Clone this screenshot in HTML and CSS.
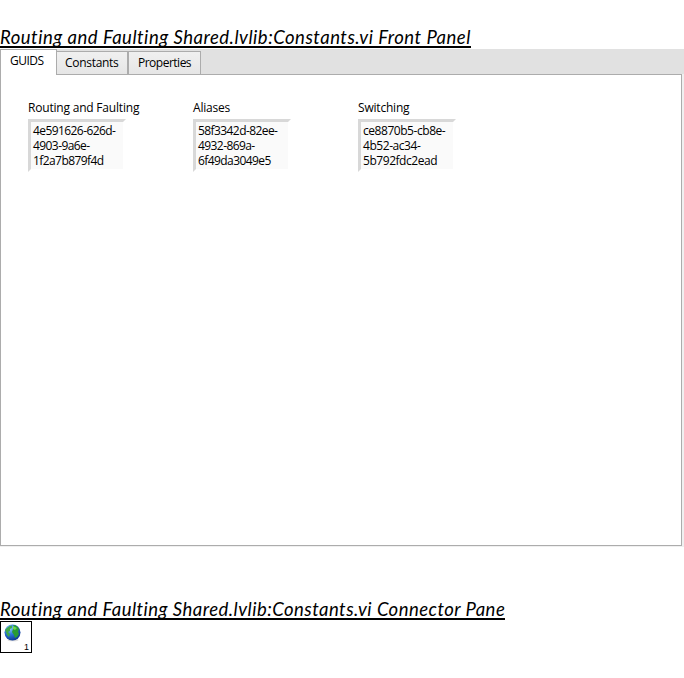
FILE: index.html
```
<!DOCTYPE html>
<html lang="en">
<head>
<meta charset="utf-8">
<title>Constants.vi</title>
<link rel="stylesheet" href="styles.css">
</head>
<body>
<h1 class="heading front"><span>Routing and Faulting Shared.lvlib:Constants.vi Front Panel</span></h1>
<main class="window">
  <nav class="tabs">
    <div class="tab active">GUIDS</div>
    <div class="tab constants">Constants</div>
    <div class="tab properties">Properties</div>
  </nav>
  <section class="panel">
    <div class="control">
      <div class="label">Routing and Faulting</div>
      <div class="field">4e591626-626d-<br>4903-9a6e-<br>1f2a7b879f4d</div>
    </div>
    <div class="control">
      <div class="label">Aliases</div>
      <div class="field">58f3342d-82ee-<br>4932-869a-<br>6f49da3049e5</div>
    </div>
    <div class="control">
      <div class="label">Switching</div>
      <div class="field switching">ce8870b5-cb8e-<br>4b52-ac34-<br>5b792fdc2ead</div>
    </div>
  </section>
</main>
<h2 class="heading connector"><span>Routing and Faulting Shared.lvlib:Constants.vi Connector Pane</span></h2>
<div class="vi-icon">
  <svg width="18" height="18" viewBox="0 0 18 18" aria-hidden="true">
    <defs><radialGradient id="sea" cx=".35" cy=".25" r=".8"><stop offset="0" stop-color="#8ccbfa"/><stop offset=".45" stop-color="#2f78dc"/><stop offset="1" stop-color="#0a3290"/></radialGradient></defs>
    <ellipse cx="10" cy="16" rx="5.5" ry="1.3" fill="#ddd"/>
    <circle cx="9.5" cy="8.5" r="8" fill="url(#sea)"/>
    <path d="M4 4Q6 1.500 9 1.500L9 4 7 5 7 7 5 8 7 10 6 13 4 11 3 8 2 6Z" fill="#3fa94c"/>
    <path d="M10 1Q14 1 16 5L15 8 16 10 14 13 12 14 11 11 9 8 10 5 12 4Z" fill="#299b35"/>
    <path d="M10 2L14 4 12 6 10 5Z" fill="#71d650"/>
  </svg>
  <span class="number">1</span>
</div>
</body>
</html>
```
FILE: styles.css
```
* { box-sizing: border-box; }
body { margin: 0; background: #fff; color: #000; font-family: "Open Sans", sans-serif; }
.heading { margin: 0; height: 20px; overflow: hidden; border-bottom: 2px solid #000; font: italic 400 18.5px/18px Lato, sans-serif; letter-spacing: .5px; white-space: nowrap; }
.heading span { display: block; }
.front { margin-top: 28px; width: 471px; }
.connector { margin-top: 53px; width: 505px; letter-spacing: .47px; }
.window { margin-top: 1px; width: 684px; height: 498px; background: #f0f0f0; }
.tabs { display: flex; align-items: flex-end; height: 25px; background: #e1e1e1; font-size: 12px; line-height: 16px; letter-spacing: -.3px; }
.tab { height: 23px; padding: 3px 0 0 8px; border: solid #acacac; border-width: 1px 1px 0 0; background: linear-gradient(#f0f0f0, #e6e6e6); white-space: nowrap; }
.tab.active { z-index: 1; width: 57px; height: 26px; margin-bottom: -1px; padding: 3px 0 0 9px; border-left: 1px solid #acacac; background: #fff; letter-spacing: -.5px; }
.constants { width: 71px; }
.properties { width: 73px; padding-left: 9px; border-left: 1px solid #acacac; letter-spacing: -.5px; }
.panel { display: flex; width: 682px; height: 472px; padding: 25px 0 0 27px; border: 1px solid #acacac; background: #fff; }
.control { width: 165px; font-size: 12px; }
.label { height: 19px; line-height: 16px; letter-spacing: -.2px; white-space: nowrap; }
.field { width: 98px; height: 53px; padding: 1px 0 0 2px; border: 3px solid transparent; border-top-color: #d8d8d8; border-left-color: #d8d8d8; background: #fafafa padding-box; line-height: 15px; letter-spacing: -.58px; white-space: nowrap; }
.field.switching { letter-spacing: -.45px; }
.vi-icon { display: flex; width: 32px; height: 32px; margin-top: 1px; padding: 2px 0 0 2px; border: 1px solid #000; }
.vi-icon svg { flex: none; }
.number { align-self: flex-end; margin-left: 3px; font: 9px/10px "Liberation Sans", sans-serif; }
```
